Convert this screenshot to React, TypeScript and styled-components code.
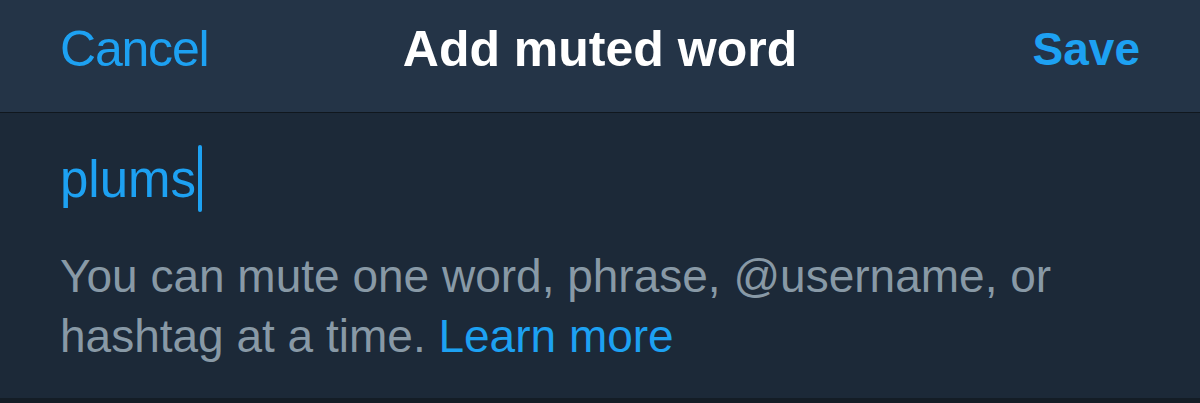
import React from "react";
import styled, { createGlobalStyle } from "styled-components";

const GlobalStyle = createGlobalStyle`
  html, body {
    margin: 0;
    padding: 0;
    background: #141d26;
  }
  body {
    font-family: "Liberation Sans", Arial, sans-serif;
  }
`;

const Screen = styled.div`
  width: 1200px;
  height: 403px;
  display: flex;
  flex-direction: column;
  background: #141d26;
  overflow: hidden;
`;

const NavBar = styled.header`
  box-sizing: border-box;
  height: 113px;
  flex: 0 0 auto;
  display: grid;
  grid-template-columns: 1fr auto 1fr;
  align-items: center;
  padding: 0 60px 14px;
  background: #243447;
  border-bottom: 1px solid #10171e;
`;

const NavButton = styled.button<{ $bold?: boolean; $align: "start" | "end" }>`
  justify-self: ${(p) => p.$align};
  background: none;
  border: none;
  padding: 0;
  font-family: "Liberation Sans", Arial, sans-serif;
  font-size: ${(p) => (p.$bold ? "46px" : "50px")};
  line-height: 1;
  font-weight: ${(p) => (p.$bold ? 700 : 400)};
  letter-spacing: ${(p) => (p.$bold ? "0" : "-1.2px")};
  color: #1da1f2;
  cursor: pointer;
`;

const Title = styled.h1`
  margin: 0;
  font-size: 50px;
  line-height: 1;
  font-weight: 700;
  color: #ffffff;
`;

const Body = styled.main`
  box-sizing: border-box;
  flex: 0 0 285px;
  background: #1c2938;
  padding: 0 60px;
  display: flex;
  flex-direction: column;
`;

const InputRow = styled.div`
  height: 133px;
  display: flex;
  align-items: flex-start;
`;

const InputText = styled.span`
  margin-top: 41px;
  font-size: 51px;
  line-height: 1;
  color: #1da1f2;
`;

const Caret = styled.span`
  width: 4px;
  height: 67px;
  margin: 32px 0 0 2px;
  border-radius: 2px;
  background: #1da1f2;
`;

const Hint = styled.p`
  margin: 0;
  font-size: 46px;
  line-height: 60px;
  color: #8899a6;
`;

const HintLink = styled.a`
  color: #1da1f2;
  text-decoration: none;
`;

export default function App() {
  return (
    <>
      <GlobalStyle />
      <Screen>
        <NavBar>
          <NavButton $align="start">Cancel</NavButton>
          <Title>Add muted word</Title>
          <NavButton $align="end" $bold>
            Save
          </NavButton>
        </NavBar>
        <Body>
          <InputRow>
            <InputText>plums</InputText>
            <Caret />
          </InputRow>
          <Hint>
            You can mute one word, phrase, @username, or
            <br />
            hashtag at a time. <HintLink href="#">Learn more</HintLink>
          </Hint>
        </Body>
      </Screen>
    </>
  );
}
